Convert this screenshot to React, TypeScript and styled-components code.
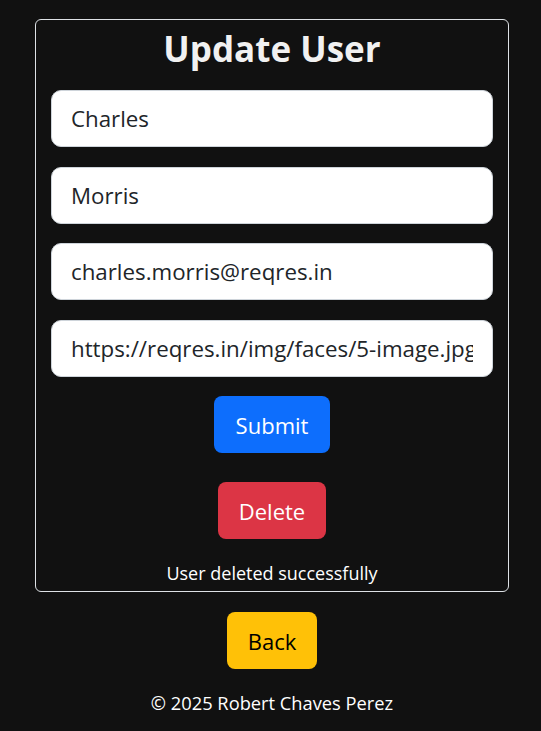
import React from 'react'
import styled, { createGlobalStyle } from 'styled-components'

const GlobalStyle = createGlobalStyle`
  html, body {
    margin: 0;
    padding: 0;
    background: #111111;
  }
  body {
    font-family: 'Open Sans', 'Noto Sans', sans-serif;
    color: #ffffff;
  }
`

const Page = styled.div`
  display: flex;
  flex-direction: column;
  align-items: center;
  padding: 19px 32px 0 35px;
`

const Card = styled.form`
  width: 474px;
  box-sizing: border-box;
  border: 1px solid #dee2e6;
  border-radius: 6px;
  padding: 7px 15px 6px;
  display: flex;
  flex-direction: column;
  align-items: center;
`

const Title = styled.h1`
  margin: 0 0 20px;
  font-size: 35px;
  line-height: 43px;
  font-weight: 700;
  color: #f1f1f1;
`

const Field = styled.input`
  width: 100%;
  box-sizing: border-box;
  height: 57px;
  margin-bottom: 19.5px;
  padding: 0 19px;
  border: 1px solid #ced4da;
  border-radius: 10px;
  background: #ffffff;
  color: #212529;
  font-family: inherit;
  font-size: 22.3px;
  outline: none;
`

const Button = styled.button<{ $tone: string; $ink?: string; $pad?: number }>`
  height: 57px;
  padding: 0 ${(p) => p.$pad ?? 21}px;
  border: none;
  border-radius: 8px;
  background: ${(p) => p.$tone};
  color: ${(p) => p.$ink || '#ffffff'};
  font-family: inherit;
  font-size: 22px;
  cursor: pointer;
`

const ButtonRow = styled.div<{ $gap: number }>`
  margin-bottom: ${(p) => p.$gap}px;
`

const BackRow = styled.div`
  margin-top: 20px;
`

const Message = styled.p`
  margin: 0;
  font-size: 18px;
  line-height: 24px;
`

const Footer = styled.footer`
  margin-top: 22px;
  font-size: 18.3px;
  line-height: 24px;
`

export default function App() {
  return (
    <>
      <GlobalStyle />
      <Page>
        <Card onSubmit={(e) => e.preventDefault()}>
          <Title>Update User</Title>
          <Field defaultValue="Charles" />
          <Field defaultValue="Morris" />
          <Field defaultValue="charles.morris@reqres.in" />
          <Field defaultValue="https://reqres.in/img/faces/5-image.jpg" />
          <ButtonRow $gap={29}>
            <Button type="submit" $tone="#0d6efd" $pad={22}>Submit</Button>
          </ButtonRow>
          <ButtonRow $gap={22}>
            <Button type="button" $tone="#dc3545">Delete</Button>
          </ButtonRow>
          <Message>User deleted successfully</Message>
        </Card>
        <BackRow>
          <Button type="button" $tone="#ffc107" $ink="#000000">Back</Button>
        </BackRow>
        <Footer>© 2025 Robert Chaves Perez</Footer>
      </Page>
    </>
  )
}
